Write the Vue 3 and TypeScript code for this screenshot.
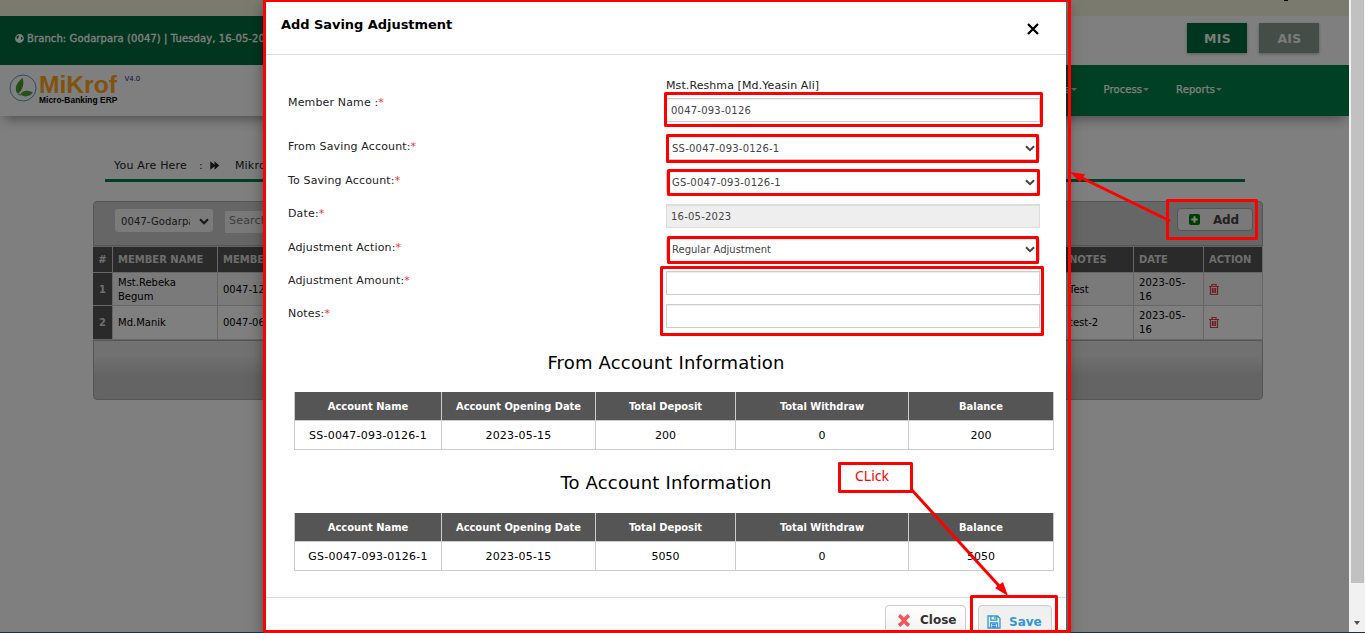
<script setup lang="ts">
interface AccountTable {
  title: string
  row: string[]
}

const columns: string[] = ['Account Name', 'Account Opening Date', 'Total Deposit', 'Total Withdraw', 'Balance']

const accounts: AccountTable[] = [
  { title: 'From Account Information', row: ['SS-0047-093-0126-1', '2023-05-15', '200', '0', '200'] },
  { title: 'To Account Information', row: ['GS-0047-093-0126-1', '2023-05-15', '5050', '0', '5050'] },
]

interface Field {
  label: string
  kind: 'select' | 'readonly' | 'input'
  value: string
}

const fields: Field[] = [
  { label: 'From Saving Account:', kind: 'select', value: 'SS-0047-093-0126-1' },
  { label: 'To Saving Account:', kind: 'select', value: 'GS-0047-093-0126-1' },
  { label: 'Date:', kind: 'readonly', value: '16-05-2023' },
  { label: 'Adjustment Action:', kind: 'select', value: 'Regular Adjustment' },
  { label: 'Adjustment Amount:', kind: 'input', value: '' },
  { label: 'Notes:', kind: 'input', value: '' },
]

const rows = [
  { no: 1, name: 'Mst.Rebeka Begum', code: '0047-120-0001', notes: 'Test', date: '2023-05-16' },
  { no: 2, name: 'Md.Manik', code: '0047-060-0002', notes: 'test-2', date: '2023-05-16' },
]
</script>

<template>
  <div class="screen">
    <div class="viewport">
      <div class="page">
        <div class="strip"><i class="speck"></i></div>
        <div class="topbar">
          <div class="branch">
            <svg width="9" height="9" viewBox="0 0 9 9">
              <circle cx="4.500" cy="4.500" r="4.400" fill="#fff" />
              <path d="M1.500 2.500 3.400 1.300l.8.800-1 1 .3.800-1 1.200-.9-1.300zM5.800 3.200l1.300-.5.600 1.500-1 1.700-.8-1 .2-.7z" fill="#006c3e" />
            </svg>
            <span>Branch: Godarpara (0047) | Tuesday, 16-05-2023</span>
          </div>
          <div class="modes">
            <span class="mode on">MIS</span>
            <span class="mode">AIS</span>
          </div>
        </div>
        <div class="navbar">
          <div class="brand">
            <svg class="leaf" width="28" height="28" viewBox="0 0 28 28">
              <circle cx="14" cy="14" r="13" fill="none" stroke="#5c9ccb" stroke-width="1" />
              <path d="M13.500 4C8.500 8 6 12 7.200 16c.5 1.600 1.600 2.600 2.600 3.200 3.700-3.400 6-9.400 3.700-15.200z" fill="#4f9f33" />
              <path d="M11.500 20.300c1.500-3.600 7-5 12.300-1.700-3.300 4.500-8.900 5-12.300 1.700z" fill="#4f9f33" />
              <path d="M7.300 15.500c.3 3 1.800 5 4.500 5.800M12.200 8.500 9.800 18" fill="none" stroke="#2d7b22" stroke-width=".8" />
            </svg>
            <div class="brandtext">
              <b class="mikrof">MiKrof</b>
              <b class="erp">Micro-Banking ERP</b>
            </div>
            <span class="ver">V4.0</span>
          </div>
          <nav class="menu">
            <span>Accounts<i></i></span>
            <span>Process<i></i></span>
            <span>Reports<i></i></span>
          </nav>
        </div>
        <div class="crumbs">
          <span>You Are Here</span><span class="colon">:</span>
          <svg width="10" height="9" viewBox="0 0 10 9"><path d="M.3.200 4.500 3.800V.200L9.300 4.500 4.500 8.800V5.200L.3 8.800z" fill="#222" /></svg>
          <span class="crumb">Mikrofinance</span>
        </div>
        <section class="list">
          <div class="tools">
            <div class="branchsel">
              <span>0047-Godarpara</span>
              <svg width="10" height="7" viewBox="0 0 10 7"><path d="m1 1.200 4 4 4-4" fill="none" stroke="#333" stroke-width="2.200" /></svg>
            </div>
            <div class="search">Search</div>
            <div class="addbtn">
              <svg width="11" height="11" viewBox="0 0 11 11"><rect width="11" height="11" rx="2" fill="#007c00" /><path d="M5.500 2.300v6.400M2.300 5.500h6.400" stroke="#fff" stroke-width="2" /></svg>
              <b>Add</b>
            </div>
          </div>
          <div class="grid head">
            <span class="no">#</span><span>MEMBER NAME</span><span>MEMBER CODE</span><span></span><span>NOTES</span><span>DATE</span><span>ACTION</span>
          </div>
          <div v-for="r in rows" :key="r.no" class="grid body">
            <span class="no">{{ r.no }}</span><span>{{ r.name }}</span><span>{{ r.code }}</span><span></span><span>{{ r.notes }}</span><span>{{ r.date }}</span>
            <span class="act">
              <svg width="10" height="11" viewBox="0 0 10 11" fill="none" stroke="#e0404a" stroke-width="1.200"><path d="M0 2.500h10M3 2.500V.5h4v2M1.500 2.500v8h7v-8M3.500 4v5M5 4v5M6.500 4v5" /></svg>
            </span>
          </div>
          <div class="foot"></div>
        </section>
      </div>

      <div class="backdrop">
        <div class="modal">
          <header>
            <b>Add Saving Adjustment</b>
            <svg width="12" height="12" viewBox="0 0 12 12"><path d="m1 1 10 10M11 1 1 11" stroke="#000" stroke-width="2.300" /></svg>
          </header>
          <div class="form">
            <div class="row member">
              <label>Member Name :<em>*</em></label>
              <div class="field">
                <span class="mname">Mst.Reshma [Md.Yeasin Ali]</span>
                <div class="ctl code">0047-093-0126</div>
              </div>
            </div>
            <div v-for="f in fields" :key="f.label" class="row">
              <label>{{ f.label }}<em>*</em></label>
              <div class="ctl" :class="[f.kind, { code: f.value.includes('-') }]">
                <span>{{ f.value }}</span>
                <svg v-if="f.kind === 'select'" width="10" height="7" viewBox="0 0 10 7"><path d="m1 1.200 4 4 4-4" fill="none" stroke="#444" stroke-width="2" /></svg>
              </div>
            </div>
          </div>
          <section v-for="a in accounts" :key="a.title" class="account">
            <h3>{{ a.title }}</h3>
            <div class="acct th"><span v-for="c in columns" :key="c">{{ c }}</span></div>
            <div class="acct td"><span v-for="(c, i) in a.row" :key="i" :class="{ code: i < 2 }">{{ c }}</span></div>
          </section>
          <footer>
            <div class="btn close">
              <svg width="14" height="13" viewBox="0 0 14 13"><path d="M2 1.500Q5 3.500 7 6.500T12 11.500M12 1.500Q8 4.500 7 6.500T2 11.500" fill="none" stroke="#f9525a" stroke-width="3.600" /></svg>
              <b>Close</b>
            </div>
            <div class="btn save">
              <svg width="14" height="14" viewBox="0 0 14 14" fill="none" stroke="#2f96dd" stroke-width="1.300"><path d="M1 1h9.500L13 3.500V13H1zM3.800 1v4.200h6V1M3.500 13V8h7v5M5 9.700h4M5 11.500h4M7.900 2v2" /></svg>
              <b>Save</b>
            </div>
          </footer>
        </div>
      </div>
    </div>
    <div class="scroll"><div class="thumb"></div><i></i></div>
    <div class="edge"></div>

    <svg class="marks" width="1365" height="633" viewBox="0 0 1365 633" fill="none" stroke="#f00" stroke-width="3" stroke-linejoin="round">
      <rect x="264.500" y=".5" width="805" height="631" />
      <rect x="665.500" y="93.500" width="376" height="32" />
      <rect x="667.500" y="135.500" width="370" height="26" />
      <rect x="668.500" y="170.500" width="370" height="24" />
      <rect x="668.500" y="237.500" width="369" height="25" />
      <rect x="661.500" y="267.500" width="381" height="67" />
      <rect x="1167.500" y="200.500" width="89" height="38" />
      <rect x="839.500" y="463.500" width="72" height="28" />
      <rect x="971.500" y="596.500" width="85" height="50" />
      <path d="M1170 221 1082 178M911 489l90 99" />
      <path d="m1070 172 15 2.300-5 8zM1008 596l-13-8 8-6z" fill="#f00" stroke="none" />
      <text x="855" y="481">CLick</text>
    </svg>
  </div>
</template>

<style>
body { margin: 0; background: #fff; }
</style>

<style scoped>
.screen {
  width: 1365px; height: 633px; position: relative; overflow: hidden;
  display: grid; grid-template: 632px 1px / 1349px 16px;
  font-family: "DejaVu Sans", Verdana, sans-serif; font-size: 10px; color: #000;
}
.screen *, .screen *::before { box-sizing: border-box; }
svg { display: block; flex: none; }
.viewport { position: relative; overflow: hidden; }
.page { height: 632px; background: #fff; }
.strip { height: 16px; background: #f5f5dc; padding-left: 1284px; }
.speck { display: block; width: 4px; height: 1px; background: #000; }
.topbar { height: 49px; display: flex; align-items: center; justify-content: space-between; padding-right: 30px; }
.branch {
  display: flex; align-items: center; gap: 3px; width: 600px; height: 49px; padding: 0 0 4px 15px;
  background: #006c3e; color: #fff; -webkit-text-stroke: .3px #fff; white-space: nowrap; letter-spacing: .1px;
}
.modes { display: flex; gap: 12px; padding-bottom: 5px; }
.mode {
  width: 60px; height: 30px; line-height: 31px; text-align: center; font-size: 12.500px; font-weight: 700; padding-left: 1px; letter-spacing: .3px;
  color: #f4f8f4; background: #8a9b91; box-shadow: 0 1px 3px rgba(0, 0, 0, .3);
}
.mode.on { background: #006c3e; }
.navbar { display: flex; height: 51px; background: #fff; box-shadow: 0 7px 12px -4px rgba(0, 0, 0, .4); }
.brand { width: 600px; display: flex; padding: 9px 0 0 9px; }
.brandtext { display: flex; flex-direction: column; padding-left: 2px; font-family: "Liberation Sans", Arial, sans-serif; }
.mikrof { font-size: 24.600px; line-height: 21px; color: #ffa41c; }
.erp { font-size: 8.400px; line-height: 10px; letter-spacing: .04px; }
.ver { font-size: 7px; line-height: 10px; color: #23238e; padding-left: 7px; }
.menu { flex: 1; display: flex; justify-content: flex-end; gap: 27px; padding: 0 127px 2px 0; align-items: center; background: #008048; color: #fff; -webkit-text-stroke: .25px #fff; }
.menu span { display: flex; align-items: center; gap: 1px; letter-spacing: .08px; }
.menu i { border: 3px solid transparent; border-top-color: #ccc; border-bottom: 0; }
.crumbs {
  height: 66px; width: 1140px; margin-left: 105px; padding: 35px 0 0 9px; border-bottom: 3px solid #00804c;
  display: flex; align-items: center; font-size: 11px; letter-spacing: .2px; color: #222; white-space: nowrap;
}
.colon { padding: 0 7px 0 12px; }
.crumb { padding-left: 15px; }
.list { width: 1170px; margin: 19px 0 0 93px; }
.tools { height: 45px; border: 1px solid #aaa; border-radius: 4px 4px 0 0; background: #ccc; display: flex; align-items: center; padding: 0 9px 7px 21px; }
.branchsel { width: 98px; height: 23px; margin-top: 1px; border-radius: 3px; background: #f6f6f6; display: flex; align-items: center; justify-content: space-between; padding: 2px 4px 0 6px; color: #333; }
.branchsel span { width: 69px; overflow: hidden; white-space: nowrap; letter-spacing: .1px; }
.search { width: 150px; height: 22px; margin: 3px 0 0 12px; padding: 3px 4px; background: #f3f3f3; color: #777; font-size: 11px; letter-spacing: .2px; }
.addbtn { margin-left: auto; width: 76px; height: 23px; margin-top: -1px; border: 1px solid #aaa; border-radius: 4px; background: #f2f2f2; display: flex; align-items: center; padding-left: 11px; gap: 13px; font-size: 12px; color: #444; }
.addbtn b { letter-spacing: -.2px; }
.grid { display: grid; grid-template-columns: 20px 105px 200px 1fr 70px 70px 59px; border-bottom: 1px solid #ccc; }
.grid span { border-right: 1px solid #ccc; padding: 0 5px; display: flex; align-items: center; line-height: 14px; }
.grid .no { background: #555; color: #ddd; font-weight: 700; justify-content: center; padding: 0; }
.grid.head { height: 27px; border-top: 1px solid #ccc; background: #555; color: #ddd; font-weight: 700; }
.grid.body { height: 33px; }
.grid.body span { padding-top: 2px; }
.grid.body span:nth-child(6) { letter-spacing: .15px; }
.grid.body:nth-child(3) { background: #f4f4f4; }
.grid.body:nth-child(4) { height: 34px; }
.grid.body:nth-child(4) span { padding-top: 0; }
.grid.body .act { padding-bottom: 1px; }
.foot { height: 60px; border: 1px solid #aaa; border-radius: 0 0 4px 4px; background: linear-gradient(#e3e3e3 25%, #c8c8c8 60%, #c8c8c8); }

.backdrop { position: absolute; inset: 0; background: rgba(0, 0, 0, .5); }
.modal { width: 801px; height: 640px; margin-left: 265px; background: #fff; box-shadow: 0 5px 15px rgba(0, 0, 0, .5); }
header { height: 55px; border-bottom: 1px solid #ddd; padding: 0 27px 5px 16px; display: flex; align-items: center; justify-content: space-between; font-size: 13px; letter-spacing: -.05px; }
header svg { margin-top: 8px; }
.form { height: 283px; padding: 22px 26px 0 23px; display: grid; grid-template-rows: 59px 34px 34px 34px 33px 33px 33px; }
.row { display: grid; grid-template-columns: 378px 374px; align-items: start; }
label { font-size: 11px; line-height: 20px; letter-spacing: .15px; color: #222; }
em { font-style: normal; color: #e33; }
.member label { padding-top: 16px; }
.row:nth-child(2) label, .row:nth-child(3) label { padding-top: 1px; }
.mname { display: block; font-size: 11px; line-height: 17px; padding-bottom: 4px; color: #222; letter-spacing: .09px; }
.ctl { height: 24px; border: 1px solid #ccc; box-shadow: inset 0 1px 1px rgba(0, 0, 0, .075); padding: 0 4px; display: flex; align-items: center; justify-content: space-between; color: #444; }
.ctl.select { padding-left: 5px; border-radius: 3px; }
.row:nth-child(5) .ctl { padding-bottom: 1px; }
.ctl.readonly { background: #eee; border-color: #ddd; }
.code { letter-spacing: .22px; }
.account { width: 760px; margin-left: 29px; }
h3 { margin: 0; height: 54px; line-height: 50px; font-size: 18px; font-weight: 400; text-align: center; padding-right: 16px; letter-spacing: .18px; }
.account + .account h3 { height: 63px; line-height: 65px; }
.acct { display: grid; grid-template-columns: 147px 154px 140px 173px 145px; border: 1px solid #ccc; border-top: 0; border-right: 0; height: 29px; }
.acct span { display: flex; align-items: center; justify-content: center; border-right: 1px solid #ccc; font-size: 11px; }
.th { background: #555; color: #fff; font-family: "DejaVu Sans Condensed", "DejaVu Sans", sans-serif; font-weight: 700; font-stretch: condensed; }
footer { margin-top: 26px; border-top: 1px solid #ddd; padding: 7px 14px 0; display: flex; justify-content: flex-end; gap: 12px; }
.btn { height: 31px; border: 1px solid #ccc; border-radius: 4px; background: linear-gradient(#fff, #f2f2f2); display: flex; align-items: center; gap: 9px; font-size: 12px; color: #333; }
.close { width: 81px; padding: 0 0 1px 11px; }
.save { width: 74px; padding: 2px 0 0 8px; gap: 8px; background: #f0f0f0; color: #2f96dd; }
.scroll { background: #f1f1f1; padding-left: 2px; }
.thumb { width: 13px; height: 583px; background: #c1c1c1; }
.scroll i { display: block; width: 0; margin: 38px 0 0 3px; border: 3.500px solid transparent; border-top: 4px solid #505050; border-bottom: 0; }
.edge { grid-column: 1 / 3; background: #1c3040; }
.marks { position: absolute; inset: 0; pointer-events: none; }
.marks text { fill: #f00; stroke: none; font: 14px "Noto Sans", sans-serif; }
</style>
